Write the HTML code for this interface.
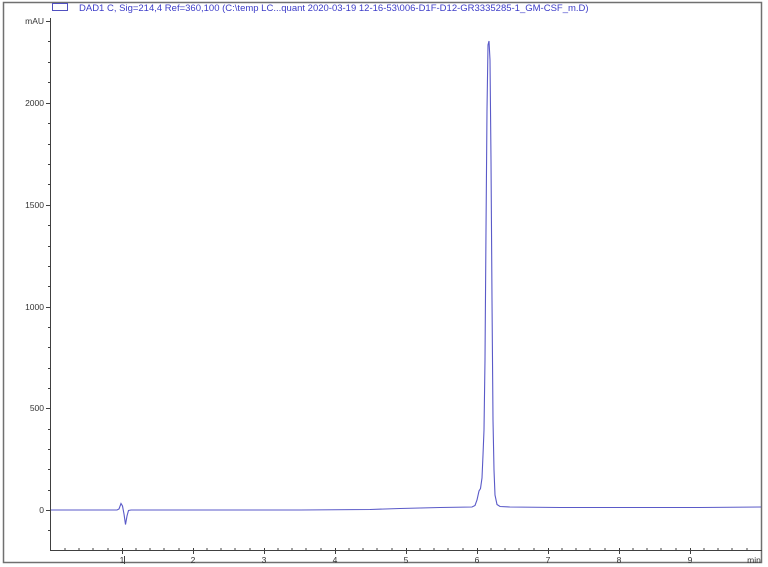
<!DOCTYPE html>
<html><head><meta charset="utf-8"><style>
html,body{margin:0;padding:0;background:#fff;}
svg{display:block;font-family:"Liberation Sans",sans-serif;}
</style></head><body>
<svg width="768" height="567" viewBox="0 0 768 567" xmlns="http://www.w3.org/2000/svg">
<rect x="3.5" y="2.5" width="758" height="560" fill="#fff" stroke="#707070" stroke-width="1.5"/>
<rect x="52.5" y="3.5" width="15" height="7" fill="#fff" stroke="#5050c0" stroke-width="1"/>
<text x="79" y="11" font-size="9.5" fill="#3c3cc8">DAD1 C, Sig=214,4 Ref=360,100 (C:\temp LC...quant 2020-03-19 12-16-53\006-D1F-D12-GR3335285-1_GM-CSF_m.D)</text>
<g stroke="#404040" stroke-width="1" fill="none">
<line x1="50.5" y1="18" x2="50.5" y2="550"/>
<line x1="50" y1="550.5" x2="762" y2="550.5"/>
<path d="M46 21.5h4M46 103.5h4M46 205.5h4M46 307.5h4M46 408.5h4M46 510.5h4"/>
<path d="M48 41.5h2M48 62.5h2M48 82.5h2M48 123.5h2M48 144.5h2M48 164.5h2M48 184.5h2M48 225.5h2M48 246.5h2M48 266.5h2M48 286.5h2M48 327.5h2M48 347.5h2M48 368.5h2M48 388.5h2M48 429.5h2M48 449.5h2M48 469.5h2M48 490.5h2M48 530.5h2"/>
</g>
<g font-size="8.5" fill="#333" text-anchor="end">
<text x="44" y="24">mAU</text>
<text x="44" y="106">2000</text>
<text x="44" y="208">1500</text>
<text x="44" y="310">1000</text>
<text x="44" y="411">500</text>
<text x="44" y="513">0</text>
</g>
<g stroke="#404040" stroke-width="1">
<path d="M122.5 548v6M193.5 548v6M264.5 548v6M335.5 548v6M406.5 548v6M477.5 548v6M548.5 548v6M619.5 548v6M690.5 548v6"/>
<path d="M65 548v2M79 548v2M93 548v2M108 548v2M136 548v2M150 548v2M164 548v2M179 548v2M207 548v2M221 548v2M235 548v2M250 548v2M278 548v2M292 548v2M306 548v2M321 548v2M349 548v2M363 548v2M377 548v2M392 548v2M420 548v2M434 548v2M448 548v2M463 548v2M491 548v2M505 548v2M519 548v2M534 548v2M562 548v2M576 548v2M590 548v2M605 548v2M633 548v2M647 548v2M661 548v2M676 548v2M704 548v2M718 548v2M732 548v2M747 548v2"/>
<path d="M124.5 556v8"/>
</g>
<g font-size="8.5" fill="#333" text-anchor="middle">
<text x="122" y="563">1</text><text x="193" y="563">2</text><text x="264" y="563">3</text><text x="335" y="563">4</text><text x="406" y="563">5</text><text x="477" y="563">6</text><text x="548" y="563">7</text><text x="619" y="563">8</text><text x="690" y="563">9</text><text x="754" y="563">min</text>
</g>
<path fill="none" stroke="#5a5ac8" stroke-width="1.1" d="M51 510 L117 510 L119 509 L121 503.5 L122.5 506 L124 514 L125.5 524.5 L127 516 L128.5 510.5 L131 510 L300 510 L370 509.5 L400 508.5 L440 507.5 L472 507 L475 505.5 L477 500 L479 491 L480.5 488.5 L482 478 L483 455 L484 430 L485 360 L486 230 L487 110 L488 45 L489 41 L490 60 L491 160 L492 300 L493 420 L494 470 L495 495 L497 504.5 L500 506.5 L510 507 L560 507.5 L620 507.5 L700 507.5 L761 507"/>
</svg>
</body></html>
